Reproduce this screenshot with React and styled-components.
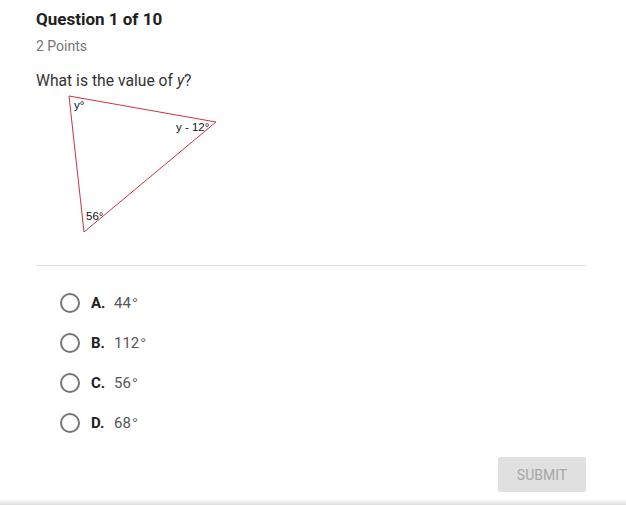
import React from "react";
import styled, { createGlobalStyle } from "styled-components";

const Global = createGlobalStyle`
  html, body { margin: 0; padding: 0; background: #fff; }
  body { font-family: Roboto, "Liberation Sans", sans-serif; }
`;

const Page = styled.div`
  position: relative;
  width: 626px;
  height: 505px;
  overflow: hidden;
  background: #fff;
`;

const Card = styled.div`
  width: 550px;
  padding: 9px 0 0 36px;
  display: flex;
  flex-direction: column;
`;

const Title = styled.h1`
  margin: 0;
  font-size: 17px;
  line-height: 20px;
  font-weight: 700;
  color: #212121;
`;

const Points = styled.div`
  margin-top: 9px;
  font-size: 14px;
  line-height: 16px;
  color: #757575;
`;

const Prompt = styled.div`
  margin-top: 18px;
  font-size: 15.7px;
  line-height: 18px;
  color: #333;
  em { font-style: italic; }
`;

const Figure = styled.svg`
  display: block;
  margin: 4px 0 0 32px;
`;

const Divider = styled.hr`
  margin: 29px 0 0;
  border: none;
  border-top: 1px solid #e0e0e0;
  width: 550px;
`;

const Options = styled.div`
  display: flex;
  flex-direction: column;
  gap: 20px;
  margin-top: 27px;
  padding-left: 24px;
`;

const Option = styled.label`
  display: flex;
  align-items: center;
  height: 20px;
  cursor: pointer;
`;

const Radio = styled.span`
  box-sizing: border-box;
  width: 20px;
  height: 20px;
  border: 2px solid #757575;
  border-radius: 50%;
  flex: none;
`;

const Letter = styled.span`
  margin-left: 11px;
  font-size: 15px;
  font-weight: 700;
  color: #212121;
  width: 23px;
`;

const Value = styled.span`
  font-size: 15px;
  color: #555;
`;

const Degree = styled.span`
  font-family: "Liberation Sans", Arial, sans-serif;
  margin-left: 1px;
`;

const Footer = styled.div`
  display: flex;
  justify-content: flex-end;
  margin-top: 24px;
`;

const Submit = styled.button`
  width: 88px;
  height: 35px;
  border: none;
  border-radius: 2px;
  background: #e0e0e0;
  color: #a6a6a6;
  font-family: Roboto, "Liberation Sans", sans-serif;
  font-size: 14px;
  font-weight: 400;
`;

const BottomShade = styled.div`
  position: absolute;
  left: 0;
  right: 0;
  bottom: 0;
  height: 6px;
  background: linear-gradient(to bottom, rgba(0,0,0,0), rgba(0,0,0,0.13));
`;

const options = [
  ["A.", "44"],
  ["B.", "112"],
  ["C.", "56"],
  ["D.", "68"],
];

export default function App() {
  return (
    <Page>
      <Global />
      <Card>
        <Title>Question 1 of 10</Title>
        <Points>2 Points</Points>
        <Prompt>
          What is the value of <em>y</em>?
        </Prompt>
        <Figure width="152" height="142" viewBox="0 0 152 142">
          <polygon
            points="1,2 148,28 16,138"
            fill="none"
            stroke="#d0333a"
            strokeWidth="1"
          />
          <g fontFamily="'Liberation Sans', Arial, sans-serif" fontSize="11.5" fill="#111">
            <text x="6" y="15">y°</text>
            <text x="108" y="37">y - 12°</text>
            <text x="18" y="126">56°</text>
          </g>
        </Figure>
        <Divider />
        <Options>
          {options.map(([l, v]) => (
            <Option key={l}>
              <Radio />
              <Letter>{l}</Letter>
              <Value>
                {v}
                <Degree>°</Degree>
              </Value>
            </Option>
          ))}
        </Options>
        <Footer>
          <Submit disabled>SUBMIT</Submit>
        </Footer>
      </Card>
      <BottomShade />
    </Page>
  );
}
